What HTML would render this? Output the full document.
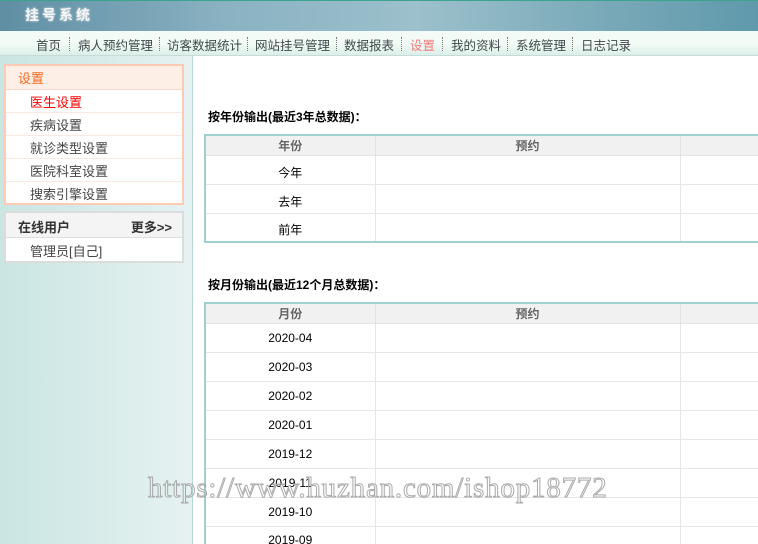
<!DOCTYPE html>
<html><head><meta charset="utf-8"><style>
*{margin:0;padding:0;box-sizing:border-box}
html,body{width:758px;height:544px;overflow:hidden}
body{background:#fff;font-family:"Liberation Sans","Noto Sans CJK SC",sans-serif;font-size:12px;color:#333;position:relative}
#hd{position:absolute;left:0;top:0;width:758px;height:31px;border-top:1px solid #3aa58c;background:linear-gradient(90deg,#5f8ea3 0%,#8ab2c2 30%,#9cc0cc 55%,#79a9b8 80%,#5f99ab 100%)}
#hd .logo{position:absolute;left:25px;top:4px;color:#f2f6f8;font-weight:bold;font-size:14px;letter-spacing:3px;text-shadow:0 0 2px #fff,0 0 1px #345}
#nav{position:absolute;left:0;top:31px;width:758px;height:25px;background:linear-gradient(#f3fbf6,#f3fbf6 50%,#dcefe8);border-bottom:1px solid #c5dcda}
#nav span{position:absolute;top:4px;font-size:12.5px;color:#3d4a4a}
#nav i{position:absolute;top:6px;height:14px;border-left:1px dotted #777}
#side{position:absolute;left:0;top:56px;width:193px;height:488px;background:linear-gradient(90deg,#c9e6e2,#e6f1f2);border-right:1px solid #b6d6d6}
.box{position:absolute;left:4px;width:180px;background:#fff}
.b1{top:64px;height:141px;border:2px solid #fdcab4}
.b1 .h{height:24px;background:#fdeee6;color:#f56a20;font-size:13px;padding:2px 0 0 12px;border-bottom:1px solid #fcd7c6}
.b1 .it{height:23px;border-bottom:1px solid #fbe8de;padding:2px 0 0 24px;font-size:13px;color:#444}
.b2{top:211px;height:52px;border:2px solid #dcdcdc}
.b2 .h{height:25px;background:#f4f4f4;border-bottom:1px solid #ddd;font-weight:bold;font-size:13px;padding:4px 10px 0 12px;color:#333}
.b2 .it{padding:3px 0 0 24px;font-size:13px;color:#444}
.t{position:absolute;left:208px;font-weight:bold;font-size:12px;color:#000}
table{position:absolute;left:204px;width:580px;border:2px solid #9fd0cf;border-collapse:collapse}
td{border:1px solid #e6e6e6;height:29px;text-align:center;font-size:12px;color:#000}
th{height:20px;background:#f1f1f1;font-weight:bold;color:#666;border:1px solid #e2e2e2;font-size:12px}
td:nth-child(1),th:nth-child(1){width:170px}
td:nth-child(2),th:nth-child(2){width:305px}
.y td{padding-top:5px}
#wm{position:absolute;left:148px;top:472px;font-family:"Liberation Serif",serif;font-size:29px;color:transparent;-webkit-text-stroke:1px #aaa;letter-spacing:0.8px;white-space:nowrap}
</style></head><body>
<div id="hd"><div class="logo">挂号系统</div></div>
<div id="nav">
<span style="left:36px">首页</span><i style="left:69px"></i>
<span style="left:78px">病人预约管理</span><i style="left:159px"></i>
<span style="left:167px">访客数据统计</span><i style="left:247px"></i>
<span style="left:255px">网站挂号管理</span><i style="left:336px"></i>
<span style="left:344px">数据报表</span><i style="left:401px"></i>
<span style="left:410px;color:#f47a7a">设置</span><i style="left:442px"></i>
<span style="left:451px">我的资料</span><i style="left:507px"></i>
<span style="left:516px">系统管理</span><i style="left:572px"></i>
<span style="left:581px">日志记录</span>
</div>
<div id="side"></div>
<div class="box b1"><div class="h">设置</div>
<div class="it" style="color:#f00">医生设置</div><div class="it">疾病设置</div><div class="it">就诊类型设置</div><div class="it">医院科室设置</div><div class="it" style="border:0">搜索引擎设置</div></div>
<div class="box b2"><div class="h">在线用户<span style="float:right">更多&gt;&gt;</span></div><div class="it">管理员[自己]</div></div>
<div class="t" style="top:108px">按年份输出(最近3年总数据)：</div>
<table class="y" style="top:134px"><tr><th>年份</th><th>预约</th><th></th></tr>
<tr><td>今年</td><td></td><td></td></tr><tr><td>去年</td><td></td><td></td></tr><tr><td>前年</td><td></td><td></td></tr></table>
<div class="t" style="top:276px">按月份输出(最近12个月总数据)：</div>
<table style="top:302px"><tr><th>月份</th><th>预约</th><th></th></tr>
<tr><td>2020-04</td><td></td><td></td></tr><tr><td>2020-03</td><td></td><td></td></tr><tr><td>2020-02</td><td></td><td></td></tr><tr><td>2020-01</td><td></td><td></td></tr><tr><td>2019-12</td><td></td><td></td></tr><tr><td>2019-11</td><td></td><td></td></tr><tr><td>2019-10</td><td></td><td></td></tr><tr><td>2019-09</td><td></td><td></td></tr></table>
<div id="wm">https://www.huzhan.com/ishop18772</div>
</body></html>
